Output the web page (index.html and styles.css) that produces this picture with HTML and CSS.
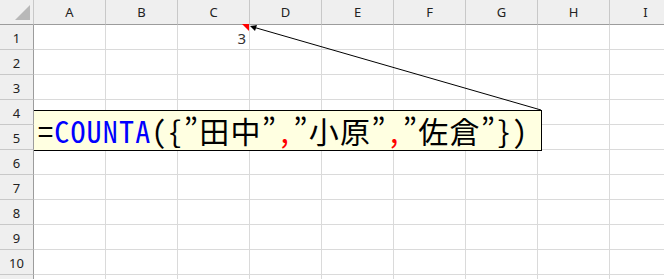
FILE: index.html
```html
<!DOCTYPE html>
<html lang="ja">
<head>
  <meta charset="UTF-8" />
  <title>COUNTA</title>
  <link rel="stylesheet" href="styles.css">
</head>
<body>
  <div class="sheet">
    <div class="grid">
      <div class="corner"><span class="corner-tri"></span></div>
      <div class="col-head">A</div>
      <div class="col-head">B</div>
      <div class="col-head">C</div>
      <div class="col-head">D</div>
      <div class="col-head">E</div>
      <div class="col-head">F</div>
      <div class="col-head">G</div>
      <div class="col-head">H</div>
      <div class="col-head">I</div>
    </div>
    <div class="grid" id="rows"></div>

    <!-- comment box + arrow -->
    <div class="comment">
      <span class="k">=</span><span class="fn">COUNTA</span><span class="k">(</span><span class="k">{</span><span class="q">”</span>田中<span class="q">”</span><span class="sep">,</span><span class="q">”</span>小原<span class="q">”</span><span class="sep">,</span><span class="q">”</span>佐倉<span class="q">”</span><span class="k">}</span><span class="k">)</span>
    </div>
    <svg class="arrow" width="664" height="279" viewBox="0 0 664 279">
      <polygon points="242,24 249,24 249,31" fill="#ff0000"/>
      <line x1="541" y1="110" x2="253" y2="27" stroke="#000" stroke-width="1"/>
      <polygon points="250,26 257,25 255,31" fill="#000"/>
    </svg>
  </div>

  <script>
    const rows = document.getElementById('rows');
    for (let r = 1; r <= 11; r++) {
      const head = document.createElement('div');
      head.className = 'row-head';
      // row 11 only peeks in at the bottom edge
      head.textContent = r <= 10 ? r : '';
      rows.appendChild(head);
      for (let c = 0; c < 9; c++) {
        const cell = document.createElement('div');
        cell.className = 'cell';
        if (r === 1 && c === 2) cell.textContent = '3';
        rows.appendChild(cell);
      }
    }
  </script>
</body>
</html>
```

FILE: styles.css
```css
body {
  margin: 0;
  overflow: hidden;
  background: #fff;
  font-family: "Noto Sans", "Liberation Sans", sans-serif;
}

.sheet {
  position: relative;
  width: 664px;
  height: 279px;
  overflow: hidden;
}

.grid {
  display: grid;
  grid-template-columns: 34px repeat(9, 72px);
}

.grid > div {
  border-right: 1px solid #dadada;
  border-bottom: 1px solid #dadada;
}

.corner, .col-head {
  height: 24px;
  background: #efefef;
  border-bottom: 1px solid #9c9c9c !important;
}

.corner {
  border-right: 1px solid #c8c8c8 !important;
  position: relative;
}

.corner-tri {
  position: absolute;
  right: 3px;
  bottom: 4px;
  width: 0;
  height: 0;
  border-left: 15px solid transparent;
  border-bottom: 15px solid #b8b8b8;
}

.col-head {
  border-right: 1px solid #c8c8c8 !important;
  font-size: 13px;
  color: #222;
  text-align: center;
  line-height: 24px;
}

.row-head {
  height: 24px;
  background: #efefef;
  border-right: 1px solid #9c9c9c !important;
  border-bottom: 1px solid #c8c8c8 !important;
  font-size: 13px;
  color: #222;
  text-align: center;
  line-height: 26px;
  position: relative;
  z-index: 3;
}

.cell {
  height: 24px;
  font-size: 15px;
  color: #333;
  text-align: right;
  line-height: 26px;
  padding-right: 3px;
}

.comment {
  position: absolute;
  left: 0;
  top: 110px;
  width: 540px;
  height: 39px;
  background: #ffffe1;
  border: 1px solid #000;
  z-index: 2;
  font-family: "Noto Sans Mono CJK JP", "Noto Sans CJK JP", sans-serif;
  font-size: 30px;
  line-height: 39px;
  letter-spacing: 1.2px;
  color: #000;
  white-space: nowrap;
  text-indent: 37px;
}

.comment .fn {
  color: #0000ff;
}

.comment .sep {
  color: #ff0000;
}

.arrow {
  position: absolute;
  left: 0;
  top: 0;
  z-index: 4;
}
```
